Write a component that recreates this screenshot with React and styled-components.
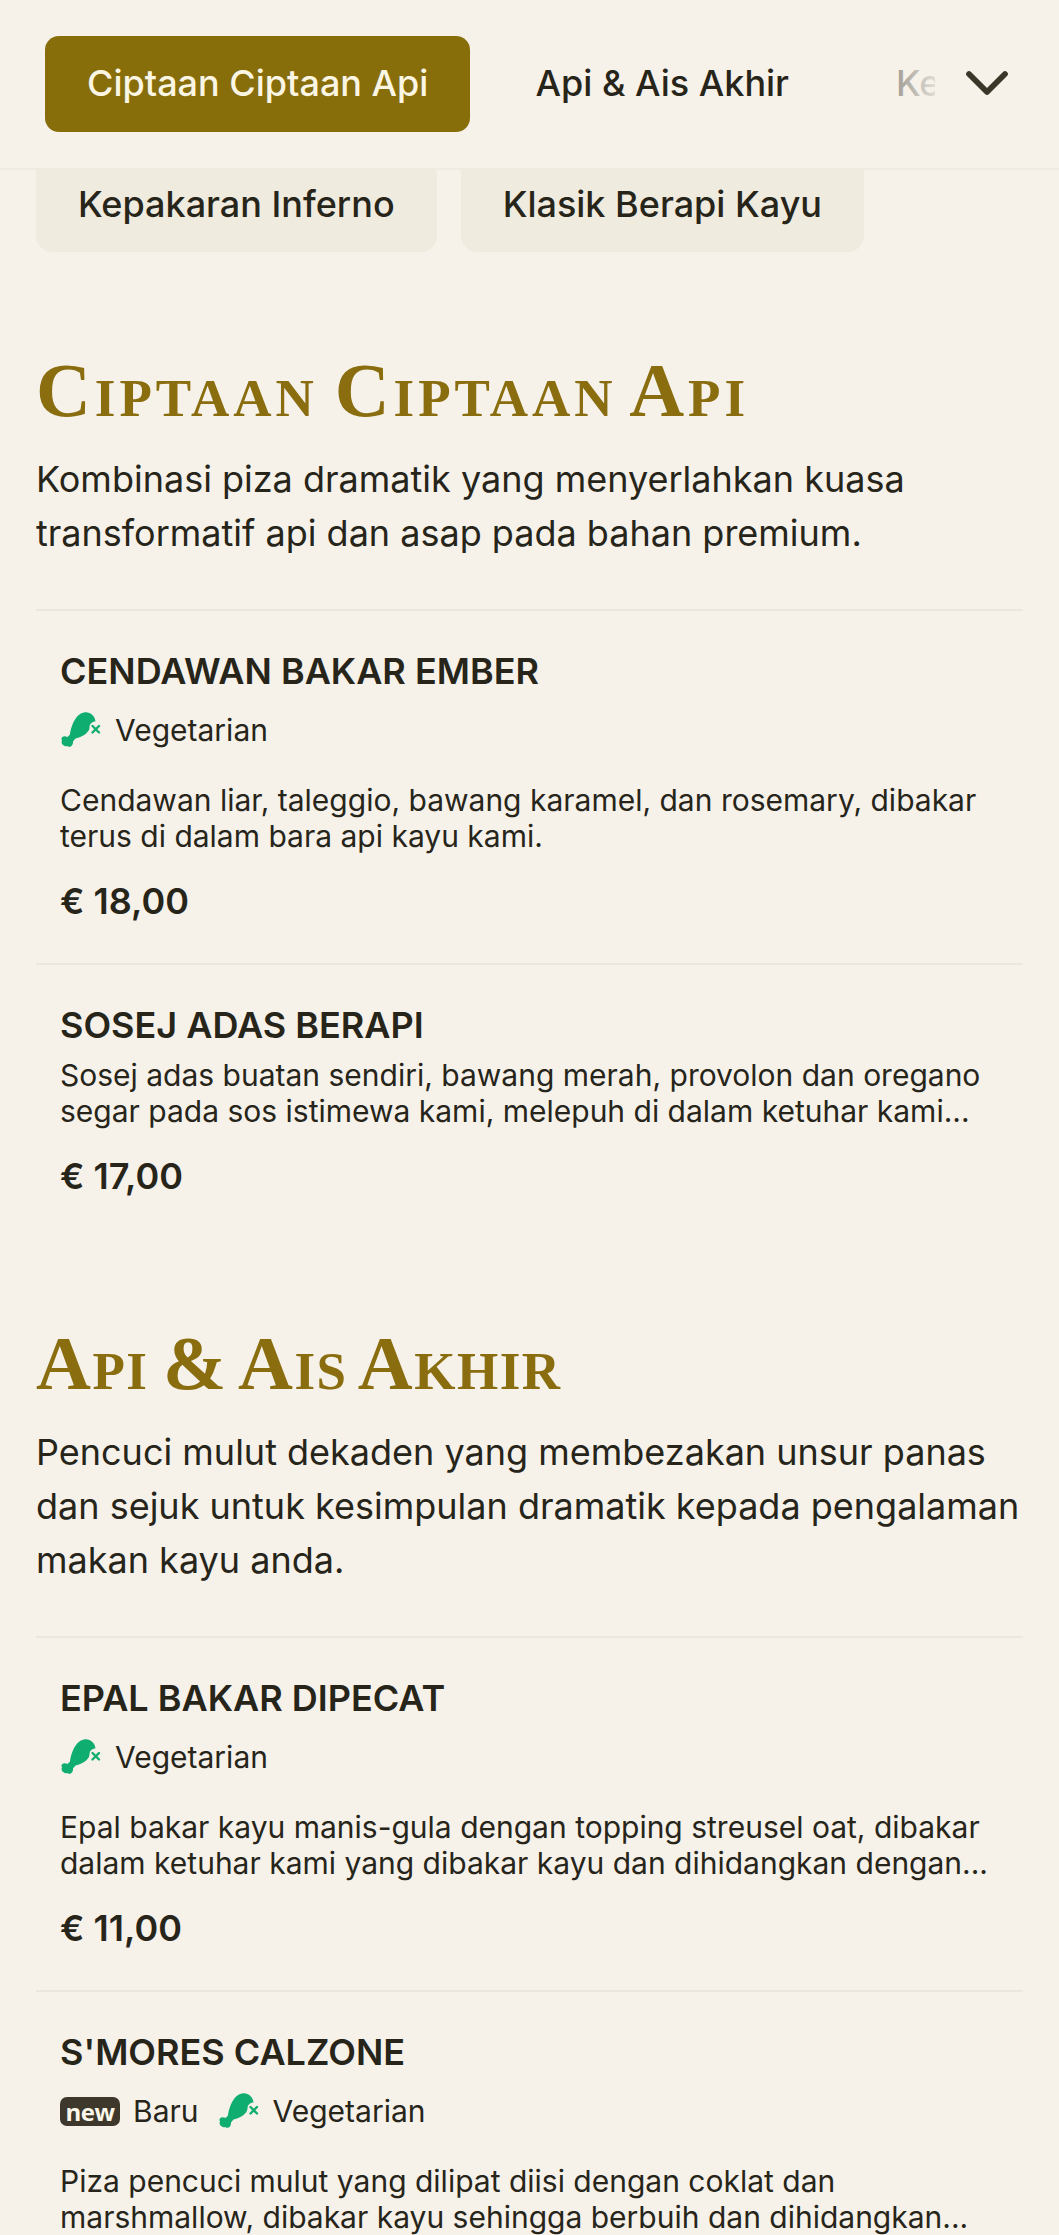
import React from "react";
import styled, { createGlobalStyle } from "styled-components";
import { ChevronDown } from "lucide-react";

const GlobalStyle = createGlobalStyle`
    html, body {
        margin: 0;
        padding: 0;
        height: 2235px;
        overflow: hidden;
        background: #f6f2ea;
        font-family: Inter, "Liberation Sans", sans-serif;
        color: #27251a;
    }
    * {
        box-sizing: border-box;
    }
`;

const LegIcon = () => (
    <svg width="42" height="36" viewBox="0 0 42 36" fill="none">
        <path
            fill="#10ad70"
            d="M24 .5C30-.5 35 4 35.500 9.500 32 9.500 29.500 12 29.500 15.500 29.500 20 23 25 15.500 26.500L13 29.500C13.500 33 10 36.500 7.500 34 5.500 35.500 0 32 2 28.500 0 25 4 23 7.500 25L10 22.500C11 15 15 2 24 .5Z"
        />
        <path
            stroke="#10ad70"
            strokeWidth="2.400"
            strokeLinecap="round"
            d="M32.500 14l6.500 6.500M39 14l-6.500 6.500"
        />
    </svg>
);

const categories = [
    { label: "Ciptaan Ciptaan Api", active: true },
    { label: "Api & Ais Akhir" },
    { label: "Kepakaran Inferno" },
];

const sections = [
    {
        title: "Ciptaan Ciptaan Api",
        tracking: 3.95,
        desc: "Kombinasi piza dramatik yang menyerlahkan kuasa transformatif api dan asap pada bahan premium.",
        items: [
            {
                name: "CENDAWAN BAKAR EMBER",
                vegetarian: true,
                text: "Cendawan liar, taleggio, bawang karamel, dan rosemary, dibakar terus di dalam bara api kayu kami.",
                price: "€ 18,00",
            },
            {
                name: "SOSEJ ADAS BERAPI",
                text: "Sosej adas buatan sendiri, bawang merah, provolon dan oregano segar pada sos istimewa kami, melepuh di dalam ketuhar kami...",
                price: "€ 17,00",
            },
        ],
    },
    {
        title: "Api & Ais Akhir",
        tracking: 1.5,
        desc: "Pencuci mulut dekaden yang membezakan unsur panas dan sejuk untuk kesimpulan dramatik kepada pengalaman makan kayu anda.",
        items: [
            {
                name: "EPAL BAKAR DIPECAT",
                vegetarian: true,
                text: "Epal bakar kayu manis-gula dengan topping streusel oat, dibakar dalam ketuhar kami yang dibakar kayu dan dihidangkan dengan...",
                price: "€ 11,00",
            },
            {
                name: "S'MORES CALZONE",
                isNew: true,
                vegetarian: true,
                text: "Piza pencuci mulut yang dilipat diisi dengan coklat dan marshmallow, dibakar kayu sehingga berbuih dan dihidangkan...",
            },
        ],
    },
];

const MenuItem = ({ item }) => {
    const hasTags = item.isNew || item.vegetarian;
    return (
        <Item>
            <ItemName>{item.name}</ItemName>
            {hasTags && (
                <Tags>
                    {item.isNew && (
                        <Tag>
                            <NewBadge>new</NewBadge>
                            Baru
                        </Tag>
                    )}
                    {item.vegetarian && (
                        <Tag>
                            <LegIcon />
                            Vegetarian
                        </Tag>
                    )}
                </Tags>
            )}
            <ItemText $spaced={hasTags}>{item.text}</ItemText>
            {item.price && <Price>{item.price}</Price>}
        </Item>
    );
};

const App = () => {
    return (
        <Page>
            <GlobalStyle />
            <Nav>
                <Scroller>
                    {categories.map((c) => (
                        <NavPill key={c.label} $active={c.active}>
                            {c.label}
                        </NavPill>
                    ))}
                </Scroller>
                <Fade />
                <Toggle>
                    <ChevronDown size={72} strokeWidth={1.900} color="#3a3628" />
                </Toggle>
            </Nav>
            <Chips>
                <Chip>Kepakaran Inferno</Chip>
                <Chip>Klasik Berapi Kayu</Chip>
            </Chips>
            {sections.map((s) => (
                <Section key={s.title}>
                    <Heading $tracking={s.tracking}>{s.title}</Heading>
                    <Lead>{s.desc}</Lead>
                    <List>
                        {s.items.map((item) => (
                            <MenuItem key={item.name} item={item} />
                        ))}
                    </List>
                </Section>
            ))}
        </Page>
    );
};

export default App;

const Page = styled.div`
    width: 1059px;
    height: 2235px;
    overflow: hidden;
    position: relative;
`;

const Nav = styled.nav`
    position: sticky;
    top: 0;
    z-index: 5;
    height: 170px;
    display: flex;
    align-items: center;
    background: #f6f2ea;
    border-bottom: 2px solid #f0ebe0;
`;

const Scroller = styled.div`
    display: flex;
    align-items: center;
    gap: 23px;
    width: 935px;
    padding-left: 45px;
    overflow: hidden;
`;

const NavPill = styled.div`
    flex: none;
    height: 96px;
    padding: 0 42px 2px;
    display: flex;
    align-items: center;
    border-radius: 14px;
    font-size: 36px;
    font-weight: 500;
    background: ${(props) => (props.$active ? "#886d0b" : "transparent")};
    color: ${(props) => (props.$active ? "#fbf6e3" : "#27251a")};
`;

const Fade = styled.div`
    position: absolute;
    top: 0;
    right: 110px;
    bottom: 0;
    width: 130px;
    background: linear-gradient(to right, rgba(246, 242, 234, 0), #f6f2ea);
    pointer-events: none;
`;

const Toggle = styled.div`
    position: absolute;
    right: 36px;
    top: 47px;
    display: flex;
`;

const Chips = styled.div`
    display: flex;
    gap: 24px;
    padding: 0 36px;
    margin-top: -30px;
`;

const Chip = styled.div`
    height: 112px;
    padding: 16px 42px 0;
    display: flex;
    align-items: center;
    border-radius: 16px;
    background: #efebdf;
    font-size: 36px;
    font-weight: 500;
`;

const Section = styled.section`
    padding: 0 36px;
    margin-bottom: 83px;
    &:first-of-type {
        margin-top: 96px;
    }
`;

const Heading = styled.h2`
    margin: 0;
    font-family: "Liberation Serif", serif;
    font-variant: small-caps;
    font-weight: 700;
    font-size: 76px;
    letter-spacing: ${(props) => props.$tracking}px;
    word-spacing: -6px;
    line-height: 84px;
    color: #8a6d0f;
`;

const Lead = styled.p`
    margin: 20px 0 0;
    font-size: 36px;
    line-height: 54px;
    color: #27251a;
`;

const List = styled.div`
    margin-top: 49px;
`;

const Item = styled.article`
    padding: 37px 24px 40px;
    border-top: 2px solid #ece7dc;
`;

const ItemName = styled.h3`
    margin: 0;
    font-size: 36px;
    line-height: 46px;
    font-weight: 600;
`;

const Tags = styled.div`
    display: flex;
    gap: 19px;
    margin-top: 14px;
    height: 44px;
`;

const Tag = styled.div`
    display: flex;
    align-items: center;
    gap: 13px;
    font-size: 30px;
`;

const NewBadge = styled.span`
    width: 60px;
    height: 29px;
    display: flex;
    align-items: center;
    justify-content: center;
    border-radius: 7px;
    background: #3d382b;
    color: #fbf6ea;
    font-family: "Open Sans", sans-serif;
    font-size: 24px;
    font-weight: 700;
    letter-spacing: -0.5px;
`;

const ItemText = styled.p`
    margin: ${(props) => (props.$spaced ? "30px" : "9px")} 0 0;
    font-size: 30px;
    line-height: 36px;
`;

const Price = styled.div`
    margin-top: 25px;
    font-size: 36px;
    line-height: 44px;
    font-weight: 600;
`;
